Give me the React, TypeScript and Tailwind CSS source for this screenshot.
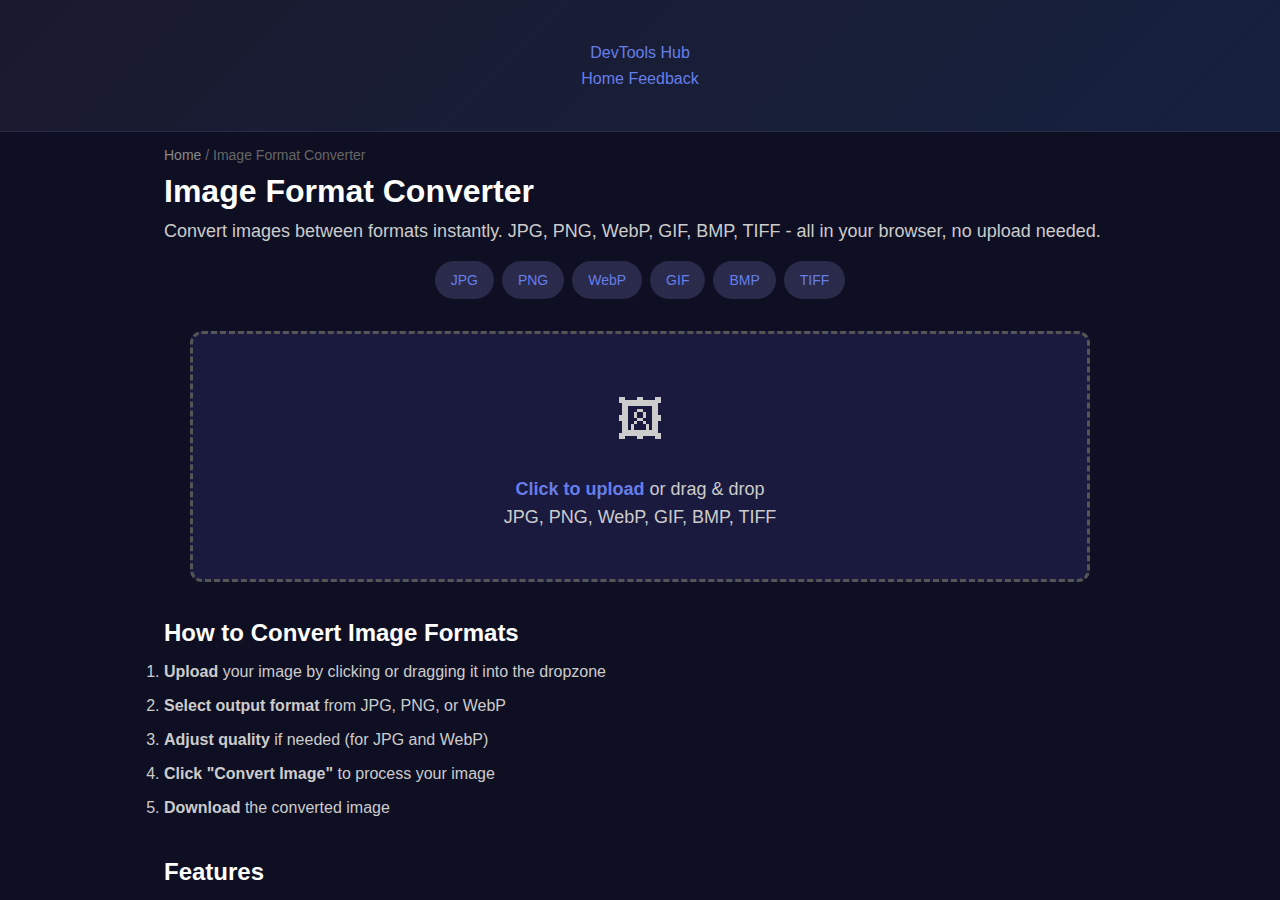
import { useState } from "react"

const formats = ["JPG", "PNG", "WebP", "GIF", "BMP", "TIFF"]

const steps = [
    { title: "Upload", text: "your image by clicking or dragging it into the dropzone" },
    { title: "Select output format", text: "from JPG, PNG, or WebP" },
    { title: "Adjust quality", text: "if needed (for JPG and WebP)" },
    { title: 'Click "Convert Image"', text: "to process your image" },
    { title: "Download", text: "the converted image" }
]

const PictureIcon = () => (
    <svg
        viewBox="0 0 14 14"
        className="block w-[42px] h-[42px] mx-auto mt-[15px] mb-9"
        fill="currentColor"
        shapeRendering="crispEdges"
        aria-hidden="true"
    >
        {/* frame */}
        <path fillRule="evenodd" d="M1 1h12v12H1zM3 3v8h8V3z" />
        <path d="M0 0h2v2H0zM12 0h2v2h-2zM0 12h2v2H0zM12 12h2v2h-2z" />
        <path d="M6 0h2v1H6zM6 13h2v1H6zM0 6h1v2H0zM13 6h1v2h-1z" />
        {/* portrait */}
        <path d="M6 4h2v1H6zM5 5h1v2H5zM8 5h1v2H8zM6 7h2v1H6zM5 8h1v1H5zM8 8h1v1H8zM4 9h1v2H4zM9 9h1v2H9z" />
    </svg>
)

const Header = () => (
    <header className="pt-10 pb-[39px] text-center leading-[26px] border-b border-[#2a2a4a] bg-[linear-gradient(135deg,#1a1a2e_0%,#16213e_100%)]">
        <a href="#" className="text-[#667eea]">
            DevTools Hub
        </a>
        <nav>
            <a href="#" className="text-[#667eea]">
                Home
            </a>{" "}
            <a href="#feedback" className="text-[#667eea]">
                Feedback
            </a>
        </nav>
    </header>
)

const Dropzone = () => {
    const [fileName, setFileName] = useState("")

    return (
        <label className="block relative max-w-[900px] mx-auto mt-8 p-12 rounded-xl border-3 border-dashed border-[#555] bg-[#1a1a3e] text-center text-[18px] leading-7 cursor-pointer">
            <PictureIcon />
            <p>
                <strong className="text-[#667eea]">Click to upload</strong> or
                drag &amp; drop
            </p>
            <p>{fileName || formats.join(", ")}</p>
            <input
                type="file"
                accept="image/*"
                className="sr-only"
                onChange={(e) => setFileName(e.target.files?.[0]?.name || "")}
            />
        </label>
    )
}

const App = () => {
    return (
        <div className="min-h-screen bg-[#0f0f23] text-[#ccc] font-['Liberation_Sans',Arial,sans-serif]">
            <Header />
            <main className="max-w-[1000px] mx-auto px-6 pt-3 pb-3">
                <nav className="text-[14px] leading-[22px] text-[#666]">
                    <a href="#" className="text-[#888]">
                        Home
                    </a>{" "}
                    / Image Format Converter
                </nav>
                <h1 className="mt-[5px] text-[32px] leading-10 font-bold text-white">
                    Image Format Converter
                </h1>
                <p className="mt-[6px] text-[18px] leading-7">
                    Convert images between formats instantly. JPG, PNG, WebP,
                    GIF, BMP, TIFF - all in your browser, no upload needed.
                </p>
                <ul className="flex flex-wrap justify-center gap-2 mt-4">
                    {formats.map((format) => (
                        <li
                            key={format}
                            className="px-4 py-2 rounded-[20px] bg-[#2a2a4a] text-[#667eea] text-[14px] leading-[22px]"
                        >
                            {format}
                        </li>
                    ))}
                </ul>
                <Dropzone />
                <h2 className="mt-8 text-[24px] leading-[37px] font-bold text-white">
                    How to Convert Image Formats
                </h2>
                <ol className="flex flex-col gap-2 mt-2 list-decimal leading-[26px]">
                    {steps.map((step) => (
                        <li key={step.title}>
                            <strong>{step.title}</strong> {step.text}
                        </li>
                    ))}
                </ol>
                <h2 className="mt-8 text-[24px] leading-[37px] font-bold text-white">
                    Features
                </h2>
            </main>
        </div>
    )
}
export default App
